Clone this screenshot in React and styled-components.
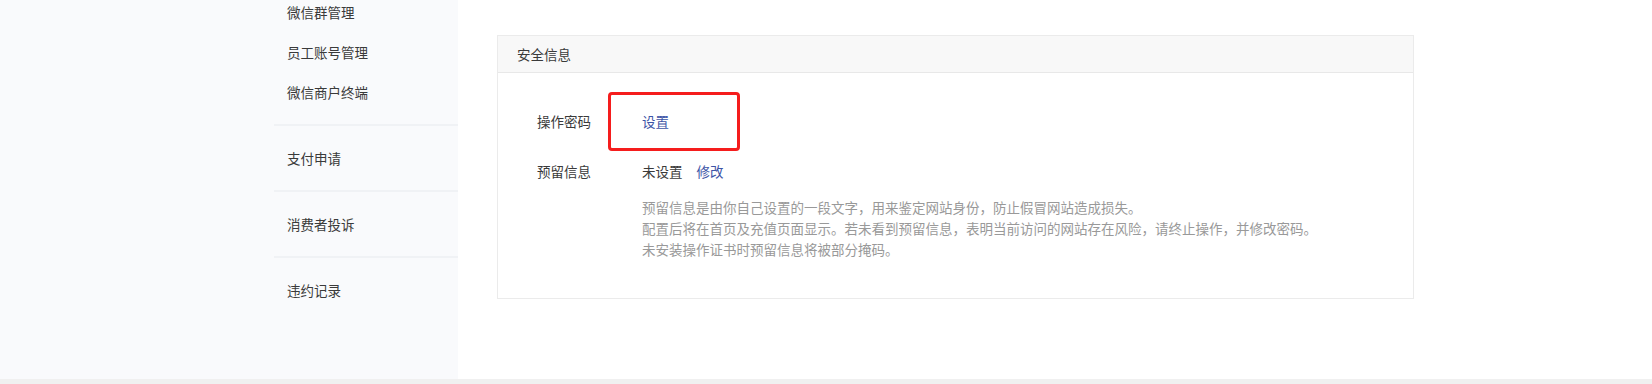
import React from "react";
import styled, { createGlobalStyle } from "styled-components";

const GlobalStyle = createGlobalStyle`
  html, body {
    margin: 0;
    padding: 0;
    background: #ffffff;
  }
  body {
    font-family: "Noto Sans CJK SC", "Noto Sans", sans-serif;
    font-size: 13.5px;
    color: #3a3a3a;
  }
`;

const navGroups = [
  ["微信群管理", "员工账号管理", "微信商户终端"],
  ["支付申请"],
  ["消费者投诉"],
  ["违约记录"],
];

const notes = [
  "预留信息是由你自己设置的一段文字，用来鉴定网站身份，防止假冒网站造成损失。",
  "配置后将在首页及充值页面显示。若未看到预留信息，表明当前访问的网站存在风险，请终止操作，并修改密码。",
  "未安装操作证书时预留信息将被部分掩码。",
];

const App = () => {
  return (
    <>
      <GlobalStyle />
      <Page>
        <Layout>
          <Sidebar>
            <Nav>
              {navGroups.map((group, i) => (
                <NavGroup key={i} $first={i === 0}>
                  {group.map((item) => (
                    <NavItem key={item}>{item}</NavItem>
                  ))}
                </NavGroup>
              ))}
            </Nav>
          </Sidebar>
          <Main>
            <Card>
              <CardHeader>安全信息</CardHeader>
              <CardBody>
                <Row>
                  <Label>操作密码</Label>
                  <Value>
                    <Highlight />
                    <LinkText>设置</LinkText>
                  </Value>
                </Row>
                <Row>
                  <Label>预留信息</Label>
                  <Value>
                    <span>未设置</span>
                    <LinkText $spaced>修改</LinkText>
                  </Value>
                </Row>
                <Notes>
                  {notes.map((line) => (
                    <div key={line}>{line}</div>
                  ))}
                </Notes>
              </CardBody>
            </Card>
          </Main>
        </Layout>
        <BottomStrip />
      </Page>
    </>
  );
};

const Page = styled.div`
  width: 100%;
  height: 384px;
  display: flex;
  flex-direction: column;
  overflow: hidden;
`;

const Layout = styled.div`
  display: flex;
  flex-direction: row;
  height: 379px;
  overflow: hidden;
`;

const Sidebar = styled.div`
  width: 458px;
  flex-shrink: 0;
  background-color: #f9fafc;
  padding-left: 274px;
  box-sizing: border-box;
  overflow: hidden;
`;

const Nav = styled.div`
  margin-top: -21px;
`;

const NavGroup = styled.div`
  padding: ${(p) => (p.$first ? "13px 0 12px" : "12px 0")};
  border-top: ${(p) => (p.$first ? "none" : "2px solid #f0f2f5")};
`;

const NavItem = styled.div`
  height: 40px;
  line-height: 40px;
  padding-left: 13px;
  color: #3a3a3a;
  white-space: nowrap;
`;

const Main = styled.div`
  flex: 1;
  background: #ffffff;
  padding: 35px 0 0 39px;
`;

const Card = styled.div`
  width: 917px;
  box-sizing: border-box;
  border: 1px solid #ebebeb;
  background: #ffffff;
`;

const CardHeader = styled.div`
  height: 36px;
  line-height: 36px;
  padding-left: 19px;
  background: #f8f8f8;
  border-bottom: 1px solid #e8e8e8;
  color: #3a3a3a;
`;

const CardBody = styled.div`
  padding: 38px 39px 38px;
`;

const Row = styled.div`
  display: flex;
  align-items: center;
  line-height: 20px;
  & + & {
    margin-top: 30px;
  }
`;

const Label = styled.div`
  width: 105px;
  flex-shrink: 0;
  color: #3a3a3a;
`;

const Value = styled.div`
  position: relative;
  display: flex;
  align-items: center;
  color: #3a3a3a;
`;

const LinkText = styled.span`
  color: #3d54a6;
  cursor: pointer;
  margin-left: ${(p) => (p.$spaced ? "14px" : "0")};
`;

const Highlight = styled.div`
  position: absolute;
  left: -34px;
  top: -19px;
  width: 132px;
  height: 59px;
  box-sizing: border-box;
  border: 3px solid #f51d1d;
  border-radius: 4px;
  pointer-events: none;
`;

const Notes = styled.div`
  margin: 16px 0 0 105px;
  line-height: 21px;
  color: #999999;
`;

const BottomStrip = styled.div`
  height: 5px;
  background: #f0f0f0;
`;

export default App;
